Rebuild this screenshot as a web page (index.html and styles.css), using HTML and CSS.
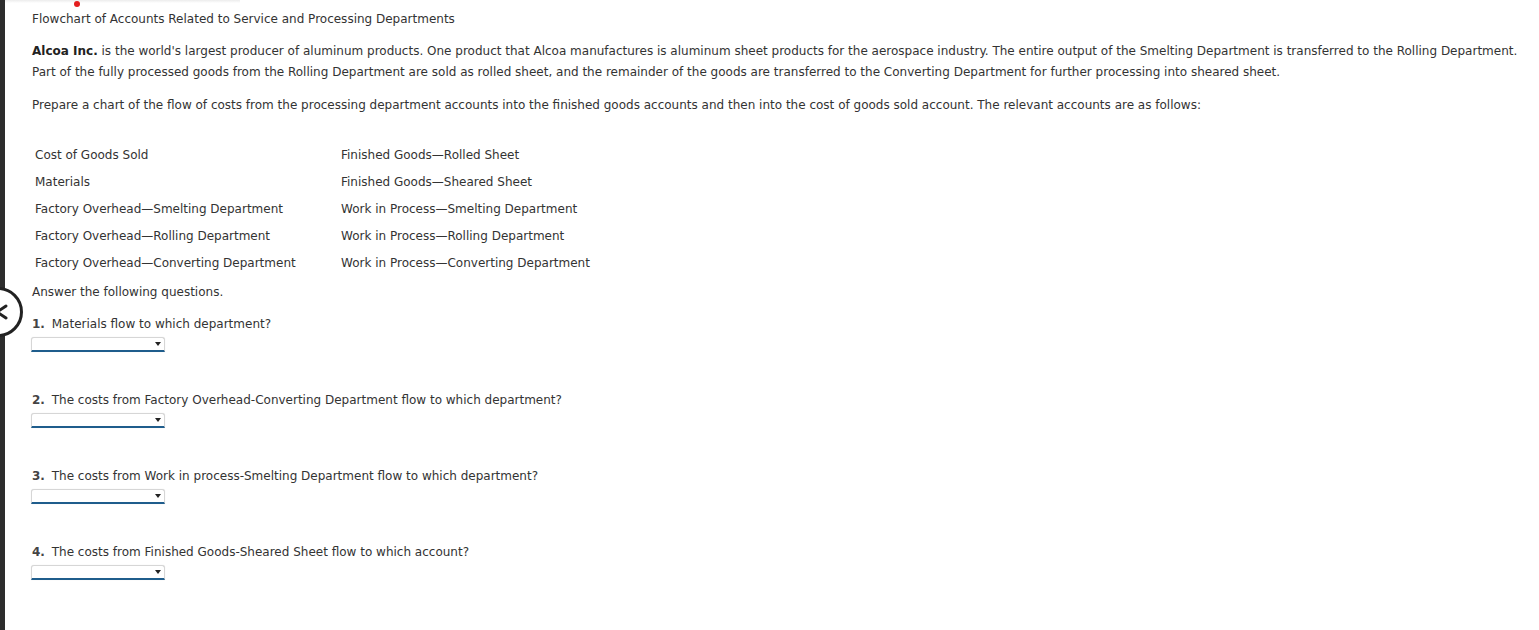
FILE: index.html
```html
<!DOCTYPE html>
<html lang="en">
<head>
<meta charset="utf-8">
<title>Flowchart of Accounts</title>
<link rel="stylesheet" href="styles.css">
</head>
<body>
<div class="sidebar"></div>
<div class="topshade"></div>
<div class="reddot"></div>
<div class="backbtn">
  <svg width="30" height="54" viewBox="0 0 30 54"><circle cx="3" cy="27" r="23.5" fill="#fff" stroke="#222" stroke-width="3"/><path d="M11 21 L2 27 L11 33" fill="none" stroke="#222" stroke-width="3" stroke-linecap="round"/></svg>
</div>
<main class="content">
  <p class="title">Flowchart of Accounts Related to Service and Processing Departments</p>
  <p class="para"><b>Alcoa Inc.</b> is the world's largest producer of aluminum products. One product that Alcoa manufactures is aluminum sheet products for the aerospace industry. The entire output of the Smelting Department is transferred to the Rolling Department. Part of the fully processed goods from the Rolling Department are sold as rolled sheet, and the remainder of the goods are transferred to the Converting Department for further processing into sheared sheet.</p>
  <p class="para">Prepare a chart of the flow of costs from the processing department accounts into the finished goods accounts and then into the cost of goods sold account. The relevant accounts are as follows:</p>
  <div class="accounts">
    <div class="acc">Cost of Goods Sold</div>
    <div class="acc">Finished Goods—Rolled Sheet</div>
    <div class="acc">Materials</div>
    <div class="acc">Finished Goods—Sheared Sheet</div>
    <div class="acc">Factory Overhead—Smelting Department</div>
    <div class="acc">Work in Process—Smelting Department</div>
    <div class="acc">Factory Overhead—Rolling Department</div>
    <div class="acc">Work in Process—Rolling Department</div>
    <div class="acc">Factory Overhead—Converting Department</div>
    <div class="acc">Work in Process—Converting Department</div>
  </div>
  <p class="answer">Answer the following questions.</p>
  <div class="question">
    <p class="qtext"><b class="num">1.</b> Materials flow to which department?</p>
    <span class="sel"><select aria-label="Answer 1"><option></option></select></span>
  </div>
  <div class="question">
    <p class="qtext"><b class="num">2.</b> The costs from Factory Overhead-Converting Department flow to which department?</p>
    <span class="sel"><select aria-label="Answer 2"><option></option></select></span>
  </div>
  <div class="question">
    <p class="qtext"><b class="num">3.</b> The costs from Work in process-Smelting Department flow to which department?</p>
    <span class="sel"><select aria-label="Answer 3"><option></option></select></span>
  </div>
  <div class="question">
    <p class="qtext"><b class="num">4.</b> The costs from Finished Goods-Sheared Sheet flow to which account?</p>
    <span class="sel"><select aria-label="Answer 4"><option></option></select></span>
  </div>
</main>
</body>
</html>
```

FILE: styles.css
```css
html, body {
  margin: 0;
  padding: 0;
  background: #fff;
}
body {
  font-family: "DejaVu Sans", Verdana, sans-serif;
  font-size: 12px;
  color: #333;
  min-height: 630px;
  overflow: hidden;
}
.sidebar {
  position: fixed;
  left: 0;
  top: 0;
  bottom: 0;
  width: 5px;
  background: #2d2d2d;
}
.topshade {
  position: absolute;
  left: 5px;
  top: 0;
  width: 235px;
  height: 3px;
  background: linear-gradient(#ececec, #fff);
}
.reddot {
  position: absolute;
  left: 74px;
  top: 1px;
  width: 6px;
  height: 6px;
  border-radius: 50%;
  background: #e41e1e;
}
.backbtn {
  position: absolute;
  left: -5px;
  top: 285px;
  width: 30px;
  height: 54px;
}
.backbtn svg { display: block; }
.content {
  padding: 9px 10px 0 32px;
}
p { margin: 0; }
.title {
  line-height: 21px;
  margin-bottom: 11px;
}
.para {
  line-height: 21px;
  margin-bottom: 12px;
}
.para b {
  color: #222;
}
.accounts {
  display: grid;
  grid-template-columns: 306px auto;
  margin-top: 26px;
  padding-left: 3px;
  width: 600px;
}
.acc {
  line-height: 27px;
}
.answer {
  line-height: 21px;
  margin-top: 5px;
}
.question {
  margin-top: 11px;
  margin-bottom: 38px;
}
.qtext {
  line-height: 21px;
}
.num {
  color: #444;
  margin-right: 3px;
}
.sel {
  position: relative;
  display: block;
  width: 134px;
  margin-top: 2px;
  margin-left: -1px;
}
.sel select {
  appearance: none;
  -webkit-appearance: none;
  display: block;
  width: 134px;
  height: 15px;
  margin: 0;
  padding: 0;
  border: 1px solid #d6d6d6;
  border-bottom: 2px solid #1f5d8c;
  border-radius: 3px 3px 0 0;
  background: #fff;
  box-shadow: 0 0 1px rgba(0,0,0,0.15);
  font: inherit;
}
.sel::after {
  content: "";
  position: absolute;
  right: 4px;
  top: 5px;
  border-left: 3px solid transparent;
  border-right: 3px solid transparent;
  border-top: 4px solid #222;
}
```
